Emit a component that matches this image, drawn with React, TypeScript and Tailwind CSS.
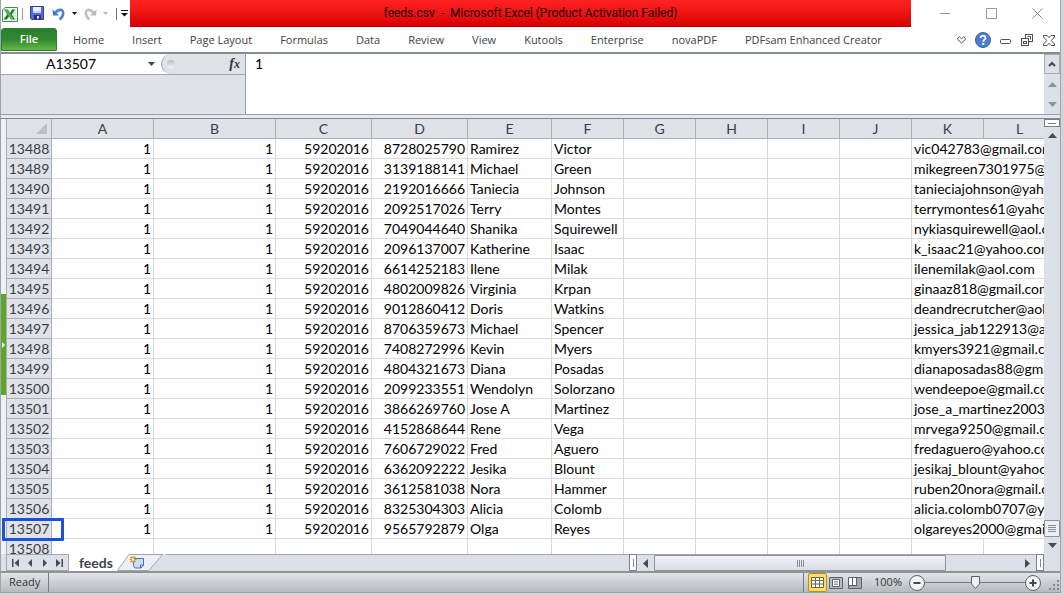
import React, { useState } from 'react';

interface FeedRow {
  id: number;
  phone: string;
  last: string;
  first: string;
  email: string;
}

const TABS = [
  'Home', 'Insert', 'Page Layout', 'Formulas', 'Data', 'Review', 'View',
  'Kutools', 'Enterprise', 'novaPDF', 'PDFsam Enhanced Creator',
];

const COLUMNS = ['A', 'B', 'C', 'D', 'E', 'F', 'G', 'H', 'I', 'J', 'K', 'L'];

const ROWS: FeedRow[] = [
  { id: 13488, phone: '8728025790', last: 'Ramirez', first: 'Victor', email: 'vic042783@gmail.com' },
  { id: 13489, phone: '3139188141', last: 'Michael', first: 'Green', email: 'mikegreen7301975@gmail.com' },
  { id: 13490, phone: '2192016666', last: 'Taniecia', first: 'Johnson', email: 'tanieciajohnson@yahoo.com' },
  { id: 13491, phone: '2092517026', last: 'Terry', first: 'Montes', email: 'terrymontes61@yahoo.com' },
  { id: 13492, phone: '7049044640', last: 'Shanika', first: 'Squirewell', email: 'nykiasquirewell@aol.com' },
  { id: 13493, phone: '2096137007', last: 'Katherine', first: 'Isaac', email: 'k_isaac21@yahoo.com' },
  { id: 13494, phone: '6614252183', last: 'Ilene', first: 'Milak', email: 'ilenemilak@aol.com' },
  { id: 13495, phone: '4802009826', last: 'Virginia', first: 'Krpan', email: 'ginaaz818@gmail.com' },
  { id: 13496, phone: '9012860412', last: 'Doris', first: 'Watkins', email: 'deandrecrutcher@aol.com' },
  { id: 13497, phone: '8706359673', last: 'Michael', first: 'Spencer', email: 'jessica_jab122913@aol.com' },
  { id: 13498, phone: '7408272996', last: 'Kevin', first: 'Myers', email: 'kmyers3921@gmail.com' },
  { id: 13499, phone: '4804321673', last: 'Diana', first: 'Posadas', email: 'dianaposadas88@gmail.com' },
  { id: 13500, phone: '2099233551', last: 'Wendolyn', first: 'Solorzano', email: 'wendeepoe@gmail.com' },
  { id: 13501, phone: '3866269760', last: 'Jose A', first: 'Martinez', email: 'jose_a_martinez2003@yahoo.com' },
  { id: 13502, phone: '4152868644', last: 'Rene', first: 'Vega', email: 'mrvega9250@gmail.com' },
  { id: 13503, phone: '7606729022', last: 'Fred', first: 'Aguero', email: 'fredaguero@yahoo.com' },
  { id: 13504, phone: '6362092222', last: 'Jesika', first: 'Blount', email: 'jesikaj_blount@yahoo.com' },
  { id: 13505, phone: '3612581038', last: 'Nora', first: 'Hammer', email: 'ruben20nora@gmail.com' },
  { id: 13506, phone: '8325304303', last: 'Alicia', first: 'Colomb', email: 'alicia.colomb0707@yahoo.com' },
  { id: 13507, phone: '9565792879', last: 'Olga', first: 'Reyes', email: 'olgareyes2000@gmail.com' },
];

const SELECTED_ROW = 13507;

const Triangle: React.FC<{ dir: 'up' | 'down' | 'left' | 'right'; color?: string }> = ({ dir, color = '#444b52' }) => {
  const points = {
    up: '0,7 4.5,2 9,7',
    down: '0,2 4.5,7 9,2',
    left: '7,0 2,4.5 7,9',
    right: '2,0 7,4.5 2,9',
  };
  return (
    <svg width="9" height="9" viewBox="0 0 9 9" aria-hidden="true">
      <polygon points={points[dir]} fill={color} />
    </svg>
  );
};

const QuickAccess = () => (
  <div className="flex w-[129px] shrink-0 items-center">
    <svg width="18" height="18" viewBox="0 0 18 18" aria-hidden="true">
      <path d="M4 2.5H16.5V16.5H1.5V5Z" fill="#f4fbf0" stroke="#3e8f4c" />
      <path d="M12 5H15M12 8H15M12 11H15M12 14H15" stroke="#a9cfa0" />
      <path d="M3 4.5H7L9 8L11 4.5H14L10.8 9.5L14 14.5H10L8 11.3L6 14.5H2.5L6.3 9.3Z" fill="#1f7a34" />
      <path d="M4 5H6.5L12.5 14H10Z" fill="#5db94f" />
    </svg>
    <span className="ml-[3px] h-3 w-px bg-[#9a9fa5]" />
    <button type="button" aria-label="Save" className="ml-[7px]">
      <svg width="15" height="15" viewBox="0 0 15 15">
        <path d="M.5 .5H13.5V13.5H1.5L.5 12.5Z" fill="#5a6bd0" stroke="#2f3ba0" />
        <path d="M3 1H11V7H3Z" fill="#eaf1ff" />
        <path d="M3 5H11V7H3Z" fill="#c3d2f5" />
        <path d="M4 9H11V13H4Z" fill="#25307c" />
        <path d="M7 10H9V12.5H7Z" fill="#e6ebfa" />
      </svg>
    </button>
    <button type="button" aria-label="Undo" className="ml-[7px] flex items-center gap-[6px]">
      <svg width="14" height="14" viewBox="0 0 14 14">
        <path d="M3 6.2C6 2 11.2 1.6 11.2 6C11.2 9 9.5 11 7.5 12.5" fill="none" stroke="#4a80d6" strokeWidth="2.6" />
        <path d="M.5 2.5L1 8.5H7Z" fill="#3f77d0" />
      </svg>
      <svg width="5" height="3" viewBox="0 0 5 3"><path d="M0 0H5L2.5 3Z" fill="#111" /></svg>
    </button>
    <button type="button" aria-label="Redo" className="ml-[6px] flex items-center gap-[6px]">
      <svg width="14" height="14" viewBox="0 0 14 14">
        <path d="M11 6.2C8 2 2.8 1.6 2.8 6C2.8 9 4.5 11 6.5 12.5" fill="none" stroke="#c0c2c5" strokeWidth="2.6" />
        <path d="M13.5 2.5L13 8.5H7Z" fill="#b5b8bc" />
      </svg>
      <svg width="5" height="3" viewBox="0 0 5 3"><path d="M0 0H5L2.5 3Z" fill="#b4b7bb" /></svg>
    </button>
    <span className="ml-2 h-3 w-px bg-[#70757a]" />
    <button type="button" aria-label="Customize Quick Access Toolbar" className="ml-1">
      <svg width="7" height="7" viewBox="0 0 7 7"><path d="M0 0H7V1H0ZM0 3H7L3.5 6.5Z" fill="#111" /></svg>
    </button>
  </div>
);

const TitleBar = () => (
  <header className="flex h-[27px]">
    <QuickAccess />
    <h1 className="flex-1 truncate border-b border-[#b30000] bg-gradient-to-b from-[#ff2222] to-[#d80000] pl-5 text-center font-[Roboto,sans-serif] text-xs leading-[27px] text-[#240000]">
      feeds.csv&nbsp; -&nbsp; Microsoft Excel (Product Activation Failed)
    </h1>
    <div className="ml-[11px] flex">
      <button type="button" aria-label="Minimize" className="flex w-[46px] items-center justify-center">
        <svg width="11" height="11" viewBox="0 0 11 11"><path d="M0 5.5H10" stroke="#999" /></svg>
      </button>
      <button type="button" aria-label="Maximize" className="flex w-[46px] items-center justify-center">
        <svg width="11" height="11" viewBox="0 0 11 11"><path d="M.5 .5H10.5V10.5H.5Z" fill="none" stroke="#999" /></svg>
      </button>
      <button type="button" aria-label="Close" className="flex w-[46px] items-center justify-center">
        <svg width="11" height="11" viewBox="0 0 11 11"><path d="M.5 .5L10.5 10.5M10.5 .5L.5 10.5" stroke="#888" /></svg>
      </button>
    </div>
  </header>
);

const RibbonTabs = () => (
  <nav className="flex h-[27px] border-b-2 border-[#868c94] pt-px text-[11px]">
    <button type="button" className="mb-px w-14 rounded-t-[3px] border border-[#2b7d3a] bg-gradient-to-b from-[#2c7f2f] via-[#31882f] to-[#66b845] font-semibold text-white">
      File
    </button>
    <div className="ml-[2px] flex flex-1">
      {TABS.map(tab => (
        <button key={tab} type="button" className="px-[14px] whitespace-nowrap text-[#3c4248]">
          {tab}
        </button>
      ))}
    </div>
    <div className="flex">
      <button type="button" aria-label="Minimize the Ribbon" className="flex w-[22px] items-center justify-center">
        <svg width="9" height="8" viewBox="0 0 9 8">
          <path d="M.7 2.2L2.3 .7L4.5 2.7L6.7 .7L8.3 2.2V3.5L4.5 7L.7 3.5Z" fill="#fff" stroke="#4a5058" />
        </svg>
      </button>
      <button type="button" aria-label="Help" className="flex w-[22px] items-center justify-center">
        <svg width="16" height="16" viewBox="0 0 16 16">
          <circle cx="8" cy="8" r="7.5" fill="#4a7fd0" stroke="#2f5fae" />
          <path d="M5.6 6C5.6 2.9 10.6 3 10.5 6C10.4 7.8 8.2 7.7 8.2 9.8" fill="none" stroke="#fff" strokeWidth="1.8" />
          <rect x="7.2" y="11" width="2" height="2" fill="#fff" />
        </svg>
      </button>
      <button type="button" aria-label="Minimize Window" className="flex w-[22px] items-center justify-center">
        <svg width="11" height="11" viewBox="0 0 11 11"><rect x=".5" y="4.5" width="10" height="4" rx="1" fill="#fff" stroke="#4a5058" /></svg>
      </button>
      <button type="button" aria-label="Restore Window" className="flex w-[22px] items-center justify-center">
        <svg width="12" height="12" viewBox="0 0 12 12" fill="#fff" stroke="#4a5058">
          <rect x="4.5" y=".5" width="7" height="7" />
          <path d="M6.5 2.5H9.5V5.5" />
          <rect x=".5" y="4.5" width="7" height="7" />
          <rect x="2.5" y="7.5" width="3" height="2" />
        </svg>
      </button>
      <button type="button" aria-label="Close Window" className="flex w-[22px] items-center justify-center">
        <svg width="12" height="11" viewBox="0 0 12 11">
          <path d="M.5 .5H4L6 2.7L8 .5H11.5V2L8.3 5.5L11.5 9V10.5H8L6 8.3L4 10.5H.5V9L3.7 5.5L.5 2Z" fill="#fff" stroke="#4a5058" />
        </svg>
      </button>
    </div>
  </nav>
);

const FormulaBar = () => {
  const [cell, setCell] = useState('A13507');
  const [formula, setFormula] = useState('1');

  return (
    <section className="flex h-[61px] border-b border-[#9a9fa6]">
      <div className="w-[245px] shrink-0 border-r border-[#9a9fa6] bg-[#dfe2e7]">
        <div className="flex h-[21px] border-b border-[#a3a7ad] bg-white">
          <input
            aria-label="Name Box"
            value={cell}
            onChange={e => setCell(e.target.value)}
            className="w-[140px] text-center font-[Lato,sans-serif] text-sm leading-5 outline-none"
          />
          <button type="button" aria-label="Name list" className="flex w-5 items-center justify-center">
            <svg width="7" height="4" viewBox="0 0 7 4"><path d="M0 0H7L3.5 4Z" fill="#444" /></svg>
          </button>
          <div className="flex flex-1 items-center justify-between rounded-l-full border-l border-[#9a9fa6] bg-[#dfe2e7] px-[5px]">
            <span className="size-2 rounded-full bg-gradient-to-b from-[#b9bcc2] to-[#f4f5f7]" />
            <button type="button" aria-label="Insert Function" className="font-['Liberation_Serif',serif] text-sm leading-5 font-bold text-[#333] italic">
              f<span className="text-xs">x</span>
            </button>
          </div>
        </div>
      </div>
      <textarea
        aria-label="Formula Bar"
        value={formula}
        onChange={e => setFormula(e.target.value)}
        className="min-w-0 flex-1 resize-none bg-white px-[9px] font-[Lato,sans-serif] text-sm leading-5 outline-none"
      />
      <div className="flex w-4 flex-col bg-[#dce0e8]">
        <button type="button" aria-label="Collapse Formula Bar" className="flex h-5 items-center justify-center border border-[#a9adb3]">
          <svg width="8" height="6" viewBox="0 0 8 6"><path d="M1 5L4 2L7 5" fill="none" stroke="#444" strokeWidth="2" /></svg>
        </button>
        <button type="button" aria-label="Scroll formula up" className="flex flex-1 items-center justify-center"><Triangle dir="up" color="#8a9496" /></button>
        <button type="button" aria-label="Scroll formula down" className="flex flex-1 items-center justify-center"><Triangle dir="down" color="#8a9496" /></button>
      </div>
    </section>
  );
};

const headCell = 'h-5 border-r border-b border-[#abafb5] bg-[#dfe2e7] p-0 font-normal text-[#3a3f45]';
const gridCell = 'h-5 border-r border-b border-[#d9d9d9] p-0 whitespace-nowrap';

const Grid = () => (
  <div className="relative min-w-0 flex-1 overflow-hidden pl-[5px]">
    <div className="absolute top-[175px] left-0 flex h-[101px] w-[5px] items-center bg-[#5ea52c]">
      <svg width="4" height="6" viewBox="0 0 4 6" aria-hidden="true"><path d="M1 0L4 3L1 6Z" fill="#fff" /></svg>
    </div>
    <table className="w-full min-w-[1050px] table-fixed border-separate border-spacing-0 border-l border-[#abafb5] bg-white font-[Lato,sans-serif] text-sm leading-[19px]">
      <colgroup>
        <col className="w-[45px]" />
        <col className="w-[102px]" />
        <col className="w-[122px]" />
        <col className="w-[96px]" />
        <col className="w-[96px]" />
        <col className="w-[84px]" />
        <col className="w-[72px]" />
        <col className="w-[72px]" />
        <col className="w-[72px]" />
        <col className="w-[72px]" />
        <col className="w-[72px]" />
        <col className="w-[72px]" />
        <col />
      </colgroup>
      <thead>
        <tr>
          <th className={headCell} aria-label="Select all">
            <svg className="mr-1 ml-auto" width="11" height="11" viewBox="0 0 11 11"><path d="M11 0V11H0Z" fill="#bcc0c5" /></svg>
          </th>
          {COLUMNS.map(col => (
            <th key={col} scope="col" className={headCell}>{col}</th>
          ))}
        </tr>
      </thead>
      <tbody>
        {ROWS.map(row => (
          <tr key={row.id}>
            <th scope="row" className={headCell}>
              {row.id === SELECTED_ROW ? (
                <div className="relative">
                  {row.id}
                  <span className="pointer-events-none absolute -top-px -left-[5px] h-[23px] w-[62px] rounded-[1px] border-3 border-[#1b50dc]" />
                </div>
              ) : row.id}
            </th>
            <td className={`${gridCell} pr-[2px] text-right`}>1</td>
            <td className={`${gridCell} pr-[2px] text-right`}>1</td>
            <td className={`${gridCell} pr-[2px] text-right`}>59202016</td>
            <td className={`${gridCell} pr-[2px] text-right`}>{row.phone}</td>
            <td className={`${gridCell} pl-[2px]`}>{row.last}</td>
            <td className={`${gridCell} pl-[2px]`}>{row.first}</td>
            <td className={gridCell} />
            <td className={gridCell} />
            <td className={gridCell} />
            <td className={gridCell} />
            <td colSpan={2} className={`${gridCell} overflow-hidden pl-[2px]`}>{row.email}</td>
          </tr>
        ))}
        <tr>
          <th scope="row" className={headCell}>13508</th>
          {COLUMNS.map(col => <td key={col} className={gridCell} />)}
        </tr>
      </tbody>
    </table>
  </div>
);

const VerticalScroll = () => (
  <div className="flex w-4 flex-col items-stretch bg-[#dce0e8]">
    <div className="flex h-2 items-center justify-center border border-[#7d8288] bg-white">
      <span className="h-px w-2 bg-[#7d8288]" />
    </div>
    <button type="button" aria-label="Scroll up" className="flex h-4 items-center justify-center"><Triangle dir="up" /></button>
    <div className="flex-1" />
    <div className="flex h-[17px] flex-col items-center justify-center gap-px rounded-[1px] border border-[#8d939b] bg-[#eceff3]">
      <span className="h-px w-2 bg-[#878d94]" />
      <span className="h-px w-2 bg-[#878d94]" />
      <span className="h-px w-2 bg-[#878d94]" />
      <span className="h-px w-2 bg-[#878d94]" />
    </div>
    <button type="button" aria-label="Scroll down" className="flex h-[17px] items-center justify-center"><Triangle dir="down" /></button>
  </div>
);

const SheetBar = () => (
  <div className="flex h-[17px] bg-[#dce0e8] pl-[5px]">
    <div className="flex min-w-0 shrink basis-[623px]">
      <div className="flex w-[63px] shrink-0 items-center justify-around border border-[#a3a7ad] px-[2px]">
        <button type="button" aria-label="First sheet">
          <svg width="8" height="8" viewBox="0 0 8 8"><path d="M0 0H1.5V8H0ZM7 0V8L2.5 4Z" fill="#444b52" /></svg>
        </button>
        <button type="button" aria-label="Previous sheet">
          <svg width="8" height="8" viewBox="0 0 8 8"><path d="M6 0V8L2 4Z" fill="#444b52" /></svg>
        </button>
        <button type="button" aria-label="Next sheet">
          <svg width="8" height="8" viewBox="0 0 8 8"><path d="M2 0V8L6 4Z" fill="#444b52" /></svg>
        </button>
        <button type="button" aria-label="Last sheet">
          <svg width="8" height="8" viewBox="0 0 8 8"><path d="M8 0H6.5V8H8ZM1 0V8L5.5 4Z" fill="#444b52" /></svg>
        </button>
      </div>
      <button type="button" className="bg-white pr-[3px] pl-[10px] font-[Lato,sans-serif] text-sm leading-[17px] font-bold text-[#3f444a]">
        feeds
      </button>
      <button type="button" aria-label="Insert Worksheet">
        <svg width="50" height="17" viewBox="0 0 50 17">
          <path d="M0 0H14L3 17H0Z" fill="#fff" />
          <path d="M13 .5H46.5L33 16.5H1.5Z" fill="#eceff4" stroke="#a3a7ad" />
          <path d="M17.5 4.5H27.5V11.5L25 14H20C18.5 14 17.5 13 17.5 11.5Z" fill="#ccdcf5" stroke="#5470a8" />
          <path d="M27.5 11L24.5 14V11Z" fill="#fff" stroke="#5470a8" />
          <path d="M17 2V9M13.5 5.5H20.5M14.5 3L19.5 8M19.5 3L14.5 8" stroke="#d98a1c" strokeWidth="1.2" />
          <circle cx="17" cy="5.5" r="1.3" fill="#fff" />
        </svg>
      </button>
      <div className="flex-1 border-t border-[#a3a7ad]" />
    </div>
    <div className="flex min-w-0 flex-1">
      <div className="flex w-2 items-center justify-center border border-[#7d8288] bg-white"><span className="h-2 w-px bg-[#7d8288]" /></div>
      <button type="button" aria-label="Scroll left" className="flex w-[17px] items-center justify-center border-t border-[#a3a7ad]"><Triangle dir="left" /></button>
      <div className="flex-1 border-t border-[#a3a7ad]">
        <div className="flex h-4 w-4/5 items-center justify-center gap-px rounded-[1px] border border-[#8d939b] bg-gradient-to-b from-[#f1f3f7] to-[#d9dde4]">
          <span className="h-[7px] w-px bg-[#878d94]" />
          <span className="h-[7px] w-px bg-[#878d94]" />
          <span className="h-[7px] w-px bg-[#878d94]" />
          <span className="h-[7px] w-px bg-[#878d94]" />
        </div>
      </div>
      <button type="button" aria-label="Scroll right" className="flex w-[17px] items-center justify-center border-t border-[#a3a7ad]"><Triangle dir="right" /></button>
      <div className="mr-4 flex w-2 items-center justify-center border border-[#7d8288] bg-white"><span className="h-2 w-px bg-[#7d8288]" /></div>
    </div>
  </div>
);

const StatusBar = () => {
  const [zoom, setZoom] = useState(100);

  return (
    <footer className="flex h-[22px] items-center border-t-2 border-b border-t-[#8e9399] border-b-[#989da2] bg-gradient-to-b from-[#e2e5e8] to-[#b6bbbf] text-[11px] text-[#333]">
      <span className="pl-2">Ready</span>
      <span className="ml-2 h-full w-px bg-[#777c82]" />
      <div className="flex-1" />
      <span className="mr-1 h-full w-px bg-[#777c82]" />
      <button type="button" aria-label="Normal view" className="flex h-[19px] w-[19px] items-center justify-center rounded-[2px] border border-[#c28a1e] bg-[#ffdc62]">
        <svg width="13" height="11" viewBox="0 0 13 11">
          <path d="M.5 .5H12.5V10.5H.5Z" fill="#fff" stroke="#6b6650" />
          <path d="M0 3.5H13M0 7H13M4.5 0V11M8.5 0V11" stroke="#6b6650" />
        </svg>
      </button>
      <button type="button" aria-label="Page layout view" className="ml-[2px]">
        <svg width="14" height="12" viewBox="0 0 14 12">
          <path d="M.5 .5H13.5V11.5H.5Z" fill="#b9bdc1" stroke="#5d6268" />
          <path d="M3.5 2.5H10.5V9.5H3.5Z" fill="#fff" stroke="#5d6268" />
          <path d="M5 4.5H9M5 6H9M5 7.5H9" stroke="#9a9fa5" />
        </svg>
      </button>
      <button type="button" aria-label="Page break preview" className="ml-[5px]">
        <svg width="14" height="12" viewBox="0 0 14 12">
          <path d="M.5 .5H13.5V11.5H.5Z" fill="#a5aaae" stroke="#5d6268" />
          <path d="M1 1H4V8H1ZM5 1H8V8H5Z" fill="#fff" />
          <path d="M4.5 0V8M8.5 0V8M0 8.5H9" stroke="#5d6268" />
        </svg>
      </button>
      <button type="button" className="ml-[10px] w-8">{zoom}%</button>
      <button type="button" aria-label="Zoom out" className="ml-[5px]" onClick={() => setZoom(z => Math.max(10, z - 10))}>
        <svg width="16" height="16" viewBox="0 0 16 16">
          <circle cx="8" cy="8" r="7.5" fill="#f3f4f5" stroke="#5d6268" />
          <path d="M4.5 8H11.5" stroke="#44494e" strokeWidth="2" />
        </svg>
      </button>
      <div className="relative h-[15px] w-[100px]">
        <svg width="100" height="15" viewBox="0 0 100 15" aria-hidden="true">
          <path d="M0 7.5H100" stroke="#777c82" />
          <path d="M46.5 1.5H54.5V9L50.5 13.5L46.5 9Z" fill="#eef0f2" stroke="#5d6268" />
        </svg>
        <input
          type="range"
          aria-label="Zoom"
          min={10}
          max={190}
          value={zoom}
          onChange={e => setZoom(Number(e.target.value))}
          className="absolute inset-0 m-0 w-full opacity-0"
        />
      </div>
      <button type="button" aria-label="Zoom in" onClick={() => setZoom(z => Math.min(190, z + 10))}>
        <svg width="16" height="16" viewBox="0 0 16 16">
          <circle cx="8" cy="8" r="7.5" fill="#f3f4f5" stroke="#5d6268" />
          <path d="M4.5 8H11.5M8 4.5V11.5" stroke="#44494e" strokeWidth="2" />
        </svg>
      </button>
      <svg className="ml-2 self-end" width="11" height="12" viewBox="0 0 11 12" aria-hidden="true">
        <path d="M8 0h2v2h-2zM4 4h2v2h-2zM8 4h2v2h-2zM0 8h2v2h-2zM4 8h2v2h-2zM8 8h2v2h-2z" fill="#858a90" />
      </svg>
    </footer>
  );
};

const App: React.FC = () => {
  return (
    <div className="h-screen overflow-hidden bg-[#d4d5d7] pr-[3px] pb-[3px] font-['Open_Sans',sans-serif]">
      <div className="flex h-full flex-col border-r border-l border-[#a0a5ad] bg-white">
        <TitleBar />
        <RibbonTabs />
        <FormulaBar />
        <div className="h-1 border-b border-[#83888e] bg-[#e6e9f2]" />
        <main className="flex min-h-0 flex-1 bg-[#eef1f5]">
          <Grid />
          <VerticalScroll />
        </main>
        <SheetBar />
        <StatusBar />
      </div>
    </div>
  );
};

export default App;
